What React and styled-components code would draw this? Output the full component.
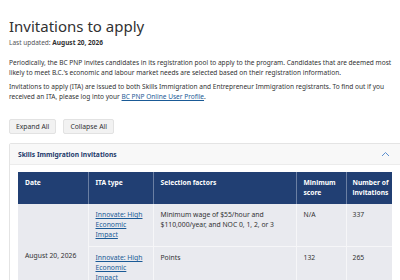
import React from "react";
import styled, { createGlobalStyle } from "styled-components";

const GlobalStyle = createGlobalStyle`
  html, body {
    margin: 0;
    padding: 0;
    background: #ffffff;
    overflow: hidden;
  }
  body {
    font-family: "Noto Sans", "Open Sans", sans-serif;
    color: #313132;
  }
`;

const Page = styled.main`
  width: 420px;
  padding: 16px 9px 0;
`;

const Title = styled.h1`
  margin: 0;
  font-size: 15px;
  font-weight: 400;
  line-height: 20px;
  color: #313132;
`;

const Updated = styled.p`
  margin: 2px 0 0;
  font-size: 6.5px;
  line-height: 10px;
  color: #555558;

  strong {
    color: #313132;
  }
`;

const Para = styled.p`
  margin: ${(p) => p.$top}px 0 0;
  font-size: 6.55px;
  line-height: 9.6px;
  white-space: nowrap;
  color: #313132;
`;

const Link = styled.a`
  color: #1a5a96;
  text-decoration: underline;
`;

const Buttons = styled.div`
  display: flex;
  gap: 7px;
  margin-top: 18px;
`;

const Button = styled.button`
  font-family: inherit;
  font-size: 6.8px;
  color: #313132;
  background: #f2f2f2;
  border: 1px solid #e2e2e2;
  border-radius: 2px;
  padding: 0 6px;
  height: 15px;
  line-height: 13px;
`;

const Panel = styled.section`
  margin-top: 9px;
  width: 391px;
  border: 1px solid #e4e4e4;
  border-radius: 2px;
`;

const PanelHead = styled.div`
  display: flex;
  align-items: center;
  justify-content: space-between;
  height: 20px;
  padding: 0 11px 0 8px;
  background: #f8f8f8;
  border-bottom: 1px solid #ececec;
  font-size: 6.7px;
  font-weight: 700;
  color: #1c3a6b;
`;

const PanelBody = styled.div`
  padding: 7px 9px 0 8px;
`;

const Table = styled.table`
  width: 374px;
  table-layout: fixed;
  border-collapse: collapse;
  font-size: 6.8px;
  line-height: 10px;

  th, td {
    box-sizing: border-box;
  }
`;

const Th = styled.th`
  width: ${(p) => p.$w}px;
  background: #213f73;
  color: #ffffff;
  font-size: 6.7px;
  font-weight: 700;
  text-align: left;
  vertical-align: top;
  padding: 6px 3px 6px 7px;
  height: 32px;
  border-right: 1px solid #6a7fa3;

  &:last-child {
    border-right: none;
    padding-left: 6px;
  }
`;

const Row = styled.tr`
  height: ${(p) => p.$h}px;
`;

const Td = styled.td`
  background: #e9eaef;
  vertical-align: ${(p) => (p.$mid ? "middle" : "top")};
  padding: 6px 4px 6px 7px;
  color: #313132;
  border-right: 1px solid #f6f6f8;
  border-bottom: 1px solid #f6f6f8;

  &:last-child {
    border-right: none;
    padding-left: 6px;
  }
`;

const Chevron = () => (
  <svg width="9" height="6" viewBox="0 0 9 6">
    <path d="M1 5 L4.5 1.5 L8 5" fill="none" stroke="#5b8fd0" strokeWidth="1" />
  </svg>
);

const rows = [
  {
    type: "Innovate: High Economic Impact",
    factors: "Minimum wage of $55/hour and $110,000/year, and NOC 0, 1, 2, or 3",
    score: "N/A",
    count: "337",
    h: 42,
  },
  {
    type: "Innovate: High Economic Impact",
    factors: "Points",
    score: "132",
    count: "265",
    h: 62,
  },
];

export default function App() {
  return (
    <>
      <GlobalStyle />
      <Page>
        <Title>Invitations to apply</Title>
        <Updated>
          Last updated: <strong>August 20, 2026</strong>
        </Updated>
        <Para $top={10}>
          Periodically, the BC PNP invites candidates in its registration pool to apply to the program. Candidates that are deemed most
          <br />
          likely to meet B.C.'s economic and labour market needs are selected based on their registration information.
        </Para>
        <Para $top={5}>
          Invitations to apply (ITA) are issued to both Skills Immigration and Entrepreneur Immigration registrants. To find out if you
          <br />
          received an ITA, please log into your <Link href="#">BC PNP Online User Profile</Link>.
        </Para>
        <Buttons>
          <Button>Expand All</Button>
          <Button>Collapse All</Button>
        </Buttons>
        <Panel>
          <PanelHead>
            <span>Skills Immigration invitations</span>
            <Chevron />
          </PanelHead>
          <PanelBody>
            <Table>
              <thead>
                <tr>
                  <Th $w={70}>Date</Th>
                  <Th $w={65}>ITA type</Th>
                  <Th $w={143}>Selection factors</Th>
                  <Th $w={50}>Minimum score</Th>
                  <Th $w={46}>Number of invitations</Th>
                </tr>
              </thead>
              <tbody>
                {rows.map((r, i) => (
                  <Row key={i} $h={r.h}>
                    {i === 0 && (
                      <Td $mid rowSpan={rows.length}>
                        August 20, 2026
                      </Td>
                    )}
                    <Td>
                      <Link href="#">{r.type}</Link>
                    </Td>
                    <Td>{r.factors}</Td>
                    <Td>{r.score}</Td>
                    <Td>{r.count}</Td>
                  </Row>
                ))}
              </tbody>
            </Table>
          </PanelBody>
        </Panel>
      </Page>
    </>
  );
}
